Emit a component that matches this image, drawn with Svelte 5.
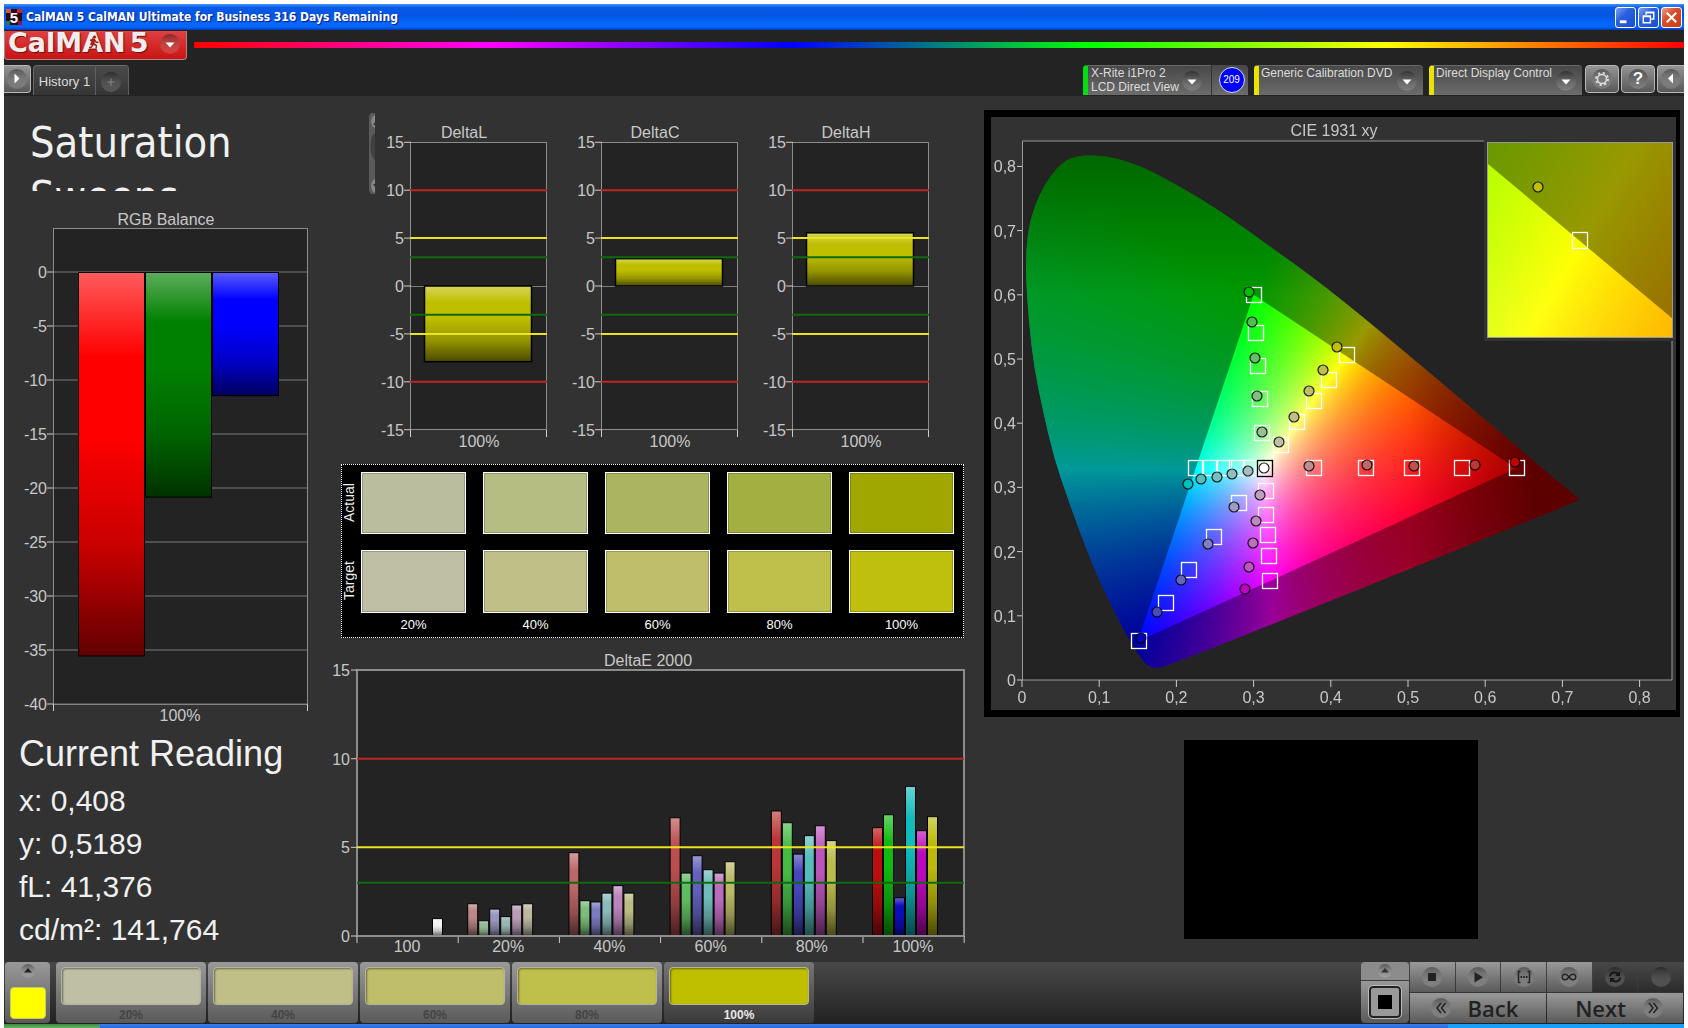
<script lang="ts">
  import { onMount } from "svelte";

  type Pt = [number, number];

  const LEVELS = ["20%", "40%", "60%", "80%", "100%"];
  const ACTUAL = ["#babd9e", "#b5bd82", "#abb560", "#a3af41", "#a0a800"];
  const TARGET = ["#bfbfa5", "#c0bf87", "#bfbe6b", "#bfbf4c", "#bfbf0e"];
  const STEPS = ["#bfbfa5", "#c0bf87", "#bfbe6b", "#bfbf4c", "#bfbf00"];

  const READINGS = ["x: 0,408", "y: 0,5189", "fL: 41,376", "cd/m²: 141,764"];

  const RGB_BARS = [
    { v: -35.5, color: "#ff0000" },
    { v: -20.8, color: "#008000" },
    { v: -11.4, color: "#0000ff" },
  ];
  const RGB_TICKS = [0, -5, -10, -15, -20, -25, -30, -35, -40];

  const DELTAS = [
    { name: "DeltaL", v: -7.9 },
    { name: "DeltaC", v: 2.85 },
    { name: "DeltaH", v: 5.55 },
  ];
  const DELTA_TICKS = [15, 10, 5, 0, -5, -10, -15];
  const LIMITS = [
    { v: 10, color: "#c02424" },
    { v: 5, color: "#ece420" },
    { v: 3, color: "#0f6a0f" },
  ];

  const DE_GROUPS = [
    { name: "100", first: 6, bars: [[0.98, "#f4f4f4"]] },
    { name: "20%", first: 0, bars: [[1.82, "#bb8787"], [0.86, "#94b994"], [1.52, "#9797be"], [1.09, "#9bb5b5"], [1.75, "#b89cb8"], [1.82, "#bab8a0"]] },
    { name: "40%", first: 0, bars: [[4.7, "#bb6767"], [1.99, "#7cbd7c"], [1.92, "#7a7abf"], [2.42, "#8ababa"], [2.84, "#bb84bb"], [2.42, "#babb84"]] },
    { name: "60%", first: 0, bars: [[6.67, "#bb4f50"], [3.55, "#5fbb5f"], [4.53, "#6161bb"], [3.74, "#70bbbb"], [3.55, "#bb6bbb"], [4.19, "#bbba68"]] },
    { name: "80%", first: 0, bars: [[7.05, "#bb3737"], [6.39, "#45bb45"], [4.62, "#4646bb"], [5.66, "#55bbbb"], [6.22, "#bb55bb"], [5.38, "#bbba4c"]] },
    { name: "100%", first: 0, bars: [[6.11, "#bb0e0e"], [6.84, "#10bb10"], [2.16, "#0d0dc0"], [8.44, "#10bbbb"], [5.94, "#bb08bb"], [6.73, "#bbba0c"]] },
  ] as { name: string; first: number; bars: [number, string][] }[];

  const yRgb = (v: number) => 81 - 10.8 * v;
  const yDelta = (v: number) => 173 - 9.58 * v;
  const yDe = (v: number) => 298 - 17.73 * v;
  const xDe = (group: number) => 20 + group * 101.2;

  // chromaticity plot
  const W = 685;
  const H = 593;
  const xCie = (v: number) => 31 + 772 * v;
  const yCie = (v: number) => 563 - 642 * v;
  const CIE_TICKS = [0, 0.1, 0.2, 0.3, 0.4, 0.5, 0.6, 0.7, 0.8];
  const comma = (v: number) => String(v).replace(".", ",");

  const GAMUT: Pt[] = [[0.64, 0.33], [0.3, 0.6], [0.15, 0.06]];
  const LOCUS: Pt[] = [
    [163, 551], [157, 549], [150, 541], [140, 526], [125, 498], [108, 463], [93, 426], [78, 385],
    [63, 341], [52, 294], [43, 250], [38, 206], [35, 162], [35, 132], [39, 103], [48, 78],
    [60, 58], [72, 45], [85, 39], [103, 38], [125, 41], [152, 50], [175, 62], [212, 83],
    [245, 105], [285, 134], [305, 148], [350, 182], [427, 246], [517, 322], [553, 353],
    [586, 380], [588, 383], [584, 385], [379, 468], [174, 550],
  ];

  const MEASURED: { color: string; at: Pt }[] = [
    { color: "#00c000", at: [258, 175] }, { color: "#4cbf4c", at: [261, 205] }, { color: "#66bf66", at: [264, 241] },
    { color: "#80bf80", at: [266, 279] }, { color: "#99bf99", at: [271, 315] },
    { color: "#c0c000", at: [346, 230] }, { color: "#bfbf4c", at: [332, 253] }, { color: "#bfbe6b", at: [318, 274] },
    { color: "#c0bf87", at: [303, 300] }, { color: "#bfbfa5", at: [288, 325] },
    { color: "#bf8f8f", at: [318, 349] }, { color: "#bf6a6a", at: [376, 348] }, { color: "#bf5050", at: [423, 349] },
    { color: "#bf3838", at: [484, 348] }, { color: "#c00000", at: [524, 345] },
    { color: "#00c0c0", at: [197, 367] }, { color: "#55bfbf", at: [210, 362] }, { color: "#77bfbf", at: [226, 360] },
    { color: "#8cbfbf", at: [241, 357] }, { color: "#a5bfbf", at: [257, 354] },
    { color: "#9c9cbf", at: [243, 390] }, { color: "#8080bf", at: [217, 427] }, { color: "#6464bf", at: [190, 463] },
    { color: "#4a4abf", at: [166, 495] }, { color: "#0000c0", at: [150, 521] },
    { color: "#bfa0bf", at: [269, 378] }, { color: "#bf88bf", at: [265, 404] }, { color: "#bf6ebf", at: [262, 426] },
    { color: "#bf55bf", at: [258, 450] }, { color: "#c000c0", at: [254, 472] },
  ];
  const GOALS: Pt[] = [
    [263, 178], [265, 216], [267, 249], [269, 282], [271, 316],
    [356, 238], [338, 263], [323, 284], [306, 305], [290, 328],
    [323, 351], [375, 351], [421, 351], [471, 351], [526, 351],
    [205, 351], [219, 351], [233, 351], [246, 351], [260, 351],
    [248, 386], [223, 420], [198, 453], [175, 486], [148, 524],
    [275, 374], [275, 398], [277, 418], [278, 439], [279, 464],
  ];

  let canvas: HTMLCanvasElement;

  function xyToRgb(x: number, y: number): number[] {
    const X = x / y;
    const Z = (1 - x - y) / y;
    const lin = [
      3.2406 * X - 1.5372 - 0.4986 * Z,
      -0.9689 * X + 1.8758 + 0.0415 * Z,
      0.0557 * X - 0.204 + 1.057 * Z,
    ].map((c) => Math.max(0, c));
    const top = Math.max(...lin);
    // fade towards the red and green ends of the locus
    const fade = 1 - Math.min(0.4, Math.max(0, (x - 0.5) * 2.4)) - Math.min(0.35, Math.max(0, (y - 0.6) * 1.5));
    return lin.map((c) => (255 * fade * c) / top);
  }

  function colorField(w: number, h: number, toXy: (px: number, py: number) => Pt): HTMLCanvasElement {
    const c = document.createElement("canvas");
    c.width = w;
    c.height = h;
    const ctx = c.getContext("2d")!;
    const img = ctx.createImageData(w, h);
    for (let j = 0; j < h; j++) {
      for (let i = 0; i < w; i++) {
        const [x, y] = toXy(i, j);
        const rgb = xyToRgb(x, Math.max(y, 0.005));
        const k = (j * w + i) * 4;
        img.data[k] = rgb[0];
        img.data[k + 1] = rgb[1];
        img.data[k + 2] = rgb[2];
        img.data[k + 3] = 255;
      }
    }
    ctx.putImageData(img, 0, 0);
    return c;
  }

  function smoothPath(pts: Pt[]): Path2D {
    const p = new Path2D();
    const n = pts.length;
    const mid = (a: Pt, b: Pt): Pt => [(a[0] + b[0]) / 2, (a[1] + b[1]) / 2];
    p.moveTo(...mid(pts[n - 1], pts[0]));
    for (let i = 0; i < n; i++) p.quadraticCurveTo(...pts[i], ...mid(pts[i], pts[(i + 1) % n]));
    p.closePath();
    return p;
  }

  function polygon(pts: Pt[]): Path2D {
    const p = new Path2D();
    pts.forEach(([x, y], i) => (i ? p.lineTo(x, y) : p.moveTo(x, y)));
    p.closePath();
    return p;
  }

  function paint(ctx: CanvasRenderingContext2D, field: HTMLCanvasElement, x: number, y: number, outer: Path2D, gamut: Path2D) {
    ctx.save();
    ctx.clip(outer);
    ctx.drawImage(field, x, y);
    ctx.fillStyle = "rgba(0, 0, 0, 0.4)";
    ctx.fillRect(x, y, field.width, field.height);
    ctx.clip(gamut);
    ctx.drawImage(field, x, y);
    ctx.restore();
  }

  onMount(() => {
    const ctx = canvas.getContext("2d")!;
    ctx.fillStyle = "#232323";
    ctx.fillRect(31, 24, 650, 539);
    const field = colorField(W, H, (px, py) => [(px - 31) / 772, (563 - py) / 642]);
    paint(ctx, field, 0, 0, smoothPath(LOCUS), polygon(GAMUT.map(([x, y]): Pt => [xCie(x), yCie(y)])));

    // magnified corner around the 100% yellow target
    ctx.fillStyle = "#323232";
    ctx.fillRect(493, 22, 192, 202);
    const zoomField = colorField(185, 195, (px, py) => [0.4193 + (px - 93) / 3752, 0.5053 - (py - 98) / 3956]);
    const box = new Path2D();
    box.rect(497, 26, 185, 195);
    paint(ctx, zoomField, 497, 26, box, polygon(GAMUT.map(([x, y]): Pt => [589 + (x - 0.4193) * 3752, 124 - (y - 0.5053) * 3956])));
  });
</script>

{#snippet knob(kind: string)}
  <svg class="knob" viewBox="0 0 20 20" width="20" height="20" aria-hidden="true">
    <circle cx="10" cy="10" r="10" fill="url(#knob)" />
    {#if kind === "down"}
      <path d="M5.500 8.500h9l-4.500 5z" fill="#fff" />
    {:else if kind === "right"}
      <path d="M7.500 4.500v10l5-5z" fill="#fff" />
    {:else if kind === "left"}
      <path d="M12 4.500v10l-5-5z" fill="#fff" />
    {:else if kind === "plus"}
      <path d="M10 6.500v7M6.500 10h7" stroke="#888" fill="none" />
    {:else if kind === "gear"}
      <circle cx="10" cy="10" r="4.500" fill="none" stroke="#ddd" stroke-width="1.500" />
      <circle cx="10" cy="10" r="6" fill="none" stroke="#ddd" stroke-width="2" stroke-dasharray="2.200 2.512" />
    {:else if kind === "stop"}
      <path d="M6 6h8v8H6z" fill="#222" />
    {:else if kind === "play"}
      <path d="M6.500 5v10.500l8.500-5.200z" fill="#222" />
    {:else if kind === "bracket"}
      <path d="M6.500 4.500H4.500v11h2M13.500 4.500h2v11h-2" fill="none" stroke="#222" stroke-width="1.500" />
      <path d="M6.500 9h1.600v2H6.500zM9.200 9h1.600v2H9.200zM11.900 9h1.600v2h-1.600z" fill="#222" />
    {:else if kind === "loop"}
      <path d="M10 10C8.500 7.800 7.300 7.200 6 7.200a2.800 2.800 0 0 0 0 5.600c1.300 0 2.500-.6 4-2.800s2.700-2.800 4-2.800a2.800 2.800 0 0 1 0 5.600c-1.300 0-2.500-.6-4-2.800z" fill="none" stroke="#222" stroke-width="1.400" />
    {:else if kind === "back"}
      <path d="M10 5l-4 5 4 5M14.500 5l-4 5 4 5" fill="none" stroke="#222" stroke-width="1.500" />
    {:else if kind === "next"}
      <path d="M6 5l4 5-4 5M10.500 5l4 5-4 5" fill="none" stroke="#222" stroke-width="1.500" />
    {:else if kind === "refresh"}
      <path d="M5 9.500C5 7 7.200 5.500 9.500 5.500c1.500 0 2.700.5 3.500 1.400M15 10.500c0 2.500-2.200 4-4.500 4-1.500 0-2.700-.5-3.500-1.400" fill="none" stroke="#151515" stroke-width="2" />
      <path d="M15 4v5h-5zM5 16v-5h5z" fill="#151515" />
    {/if}
  </svg>
{/snippet}

<svg class="defs" width="0" height="0" aria-hidden="true">
  <defs>
    <linearGradient id="knob" x1="0" y1="0" x2="0" y2="1">
      <stop offset="0" stop-color="#000" stop-opacity=".38" />
      <stop offset="1" stop-color="#fff" stop-opacity=".14" />
    </linearGradient>
    <linearGradient id="shade" x1="0" y1="0" x2="0" y2="1">
      <stop offset="0" stop-color="#fff" stop-opacity=".36" />
      <stop offset=".22" stop-color="#fff" stop-opacity="0" />
      <stop offset=".42" stop-color="#000" stop-opacity="0" />
      <stop offset=".72" stop-color="#000" stop-opacity=".22" />
      <stop offset="1" stop-color="#000" stop-opacity=".62" />
    </linearGradient>
  </defs>
</svg>

<div class="window">
  <div class="titlebar">
    <svg width="16" height="16" viewBox="0 0 16 16" aria-hidden="true">
      <rect width="16" height="16" fill="#2a0a14" />
      <path d="M0 0h5v4H0z" fill="#d85a30" /><path d="M11 0h5v4h-5z" fill="#c02828" /><path d="M0 12h4v4H0z" fill="#28803c" /><path d="M12 12h4v4h-4z" fill="#8a1450" />
      <text x="8" y="14" text-anchor="middle" class="appicon">5</text>
    </svg>
    <span class="caption">CalMAN 5 CalMAN Ultimate for Business 316 Days Remaining</span>
    <button class="win" aria-label="Minimize"><svg viewBox="0 0 20 20"><path d="M4 13h7v3H4z" fill="#fff" /></svg></button>
    <button class="win" aria-label="Restore"><svg viewBox="0 0 20 20"><path d="M7.500 7V4.500h8v7H13M7 5h9" fill="none" stroke="#fff" stroke-width="1.500" /><path d="M4.500 8.500h7.500v7H4.500zM4 9h8" fill="none" stroke="#fff" stroke-width="1.500" /></svg></button>
    <button class="win close" aria-label="Close"><svg viewBox="0 0 20 20"><path d="M5 5l10 10M15 5L5 15" stroke="#fff" stroke-width="2.200" /></svg></button>
  </div>

  <header>
    <div class="brandrow">
      <button class="brand">
        <span>CalMAN</span><span>5</span>
        <svg class="runner" viewBox="0 0 12 14" width="12" height="14" aria-hidden="true">
          <circle cx="6.500" cy="2" r="1.600" fill="#a81818" />
          <path d="M2 5.500l4-1.500 2 3 2.500.5M6 4.500L5.500 9l3 1.500-.5 3M5.500 9L3 12.500H1" fill="none" stroke="#a81818" stroke-width="1.400" />
        </svg>
        {@render knob("down")}
      </button>
      <div class="rainbow"></div>
    </div>
    <div class="tabs">
      <button class="square first" aria-label="Expand">{@render knob("right")}</button>
      <button class="tab history">History 1</button>
      <button class="tab add" aria-label="Add history">{@render knob("plus")}</button>
      <span class="grow"></span>
      <button class="tab device meter"><span>X-Rite i1Pro 2<br />LCD Direct View</span>{@render knob("down")}</button>
      <div class="count"><b>209</b></div>
      <button class="tab device source"><span>Generic Calibration DVD</span>{@render knob("down")}</button>
      <button class="tab device display"><span>Direct Display Control</span>{@render knob("down")}</button>
      <button class="square" aria-label="Settings">{@render knob("gear")}</button>
      <button class="square help"><span>?</span></button>
      <button class="square last" aria-label="Collapse">{@render knob("left")}</button>
    </div>
  </header>

  <main>
    <section class="left">
      <h1>Saturation Sweeps</h1>
      <svg class="chart" viewBox="0 0 333 541">
        <text x="162" y="34" class="mid">RGB Balance</text>
        <rect x="49.500" y="37.500" width="254" height="476" class="plot" />
        {#each RGB_TICKS as v}
          <line x1="50" x2="303" y1={yRgb(v)} y2={yRgb(v)} class="grid" />
          <line x1="43" x2="49" y1={yRgb(v)} y2={yRgb(v)} class="tick" />
          <text x="43" y={yRgb(v) + 6} class="end">{v}</text>
        {/each}
        <path d="M49.500 513v7M303.500 513v7" class="tick" />
        {#each RGB_BARS as bar, i}
          <rect x={74.5 + i * 67} y="81.500" width="66" height={-bar.v * 10.8} fill={bar.color} />
          <rect x={74.5 + i * 67} y="81.500" width="66" height={-bar.v * 10.8} fill="url(#shade)" stroke="#000" />
        {/each}
        <text x="176" y="530" class="mid">100%</text>
      </svg>
      <div class="reading">
        <h2>Current Reading</h2>
        {#each READINGS as line}
          <p>{line}</p>
        {/each}
      </div>
    </section>

    <section class="middle">
      <div class="deltas">
        <svg class="sliver" viewBox="0 0 6 81" width="6" height="81" aria-hidden="true">
          <path d="M2 0h4v81H2l-2-3V3z" fill="#5a5a5a" />
          <path d="M6 2C1 4 1 13 6 15zM6 66C1 68 1 78 6 80z" fill="#888" />
          <path d="M6 20C0 23 0 43 6 47z" fill="#404040" />
          <path d="M6 9l-2 3h2zM4 71h2v3z" fill="#333" />
        </svg>
        {#each DELTAS as d}
          <svg class="delta" viewBox="0 0 191 342">
            <text x="89" y="25" class="mid">{d.name}</text>
            <rect x="35.500" y="29.500" width="136" height="287" class="plot" />
            <line x1="36" x2="171" y1="173.500" y2="173.500" class="grid" />
            {#each DELTA_TICKS as v}
              <line x1="29" x2="36" y1={yDelta(v)} y2={yDelta(v)} class="tick" />
              <text x="29" y={yDelta(v) + 6} class="end">{v}</text>
            {/each}
            <path d="M35.500 317v7M171.500 317v7" class="tick" />
            <rect x="49.500" y={yDelta(Math.max(0, d.v))} width="107" height={Math.abs(d.v) * 9.58} fill="#bfbf00" />
            <rect x="49.500" y={yDelta(Math.max(0, d.v))} width="107" height={Math.abs(d.v) * 9.58} fill="url(#shade)" stroke="#000" stroke-width="1.500" />
            {#each LIMITS as l}
              <path d="M35 {yDelta(l.v)}h137M35 {yDelta(-l.v)}h137" stroke={l.color} stroke-width="2" />
            {/each}
            <text x="104" y="334" class="mid">100%</text>
          </svg>
        {/each}
      </div>

      <div class="swatches">
        <div class="line">
          <span class="side">Actual</span>
          {#each ACTUAL as color}
            <i style:background={color}></i>
          {/each}
        </div>
        <div class="line target">
          <span class="side">Target</span>
          {#each TARGET as color}
            <i style:background={color}></i>
          {/each}
        </div>
        <div class="line names">
          <span class="side"></span>
          {#each LEVELS as name}
            <b>{name}</b>
          {/each}
        </div>
      </div>

      <svg class="chart" viewBox="0 0 643 324">
        <text x="311" y="28" class="mid">DeltaE 2000</text>
        <rect x="20" y="32" width="607" height="266" class="plot thick" />
        {#each DE_GROUPS as g, i}
          {#each g.bars as [v, color], j}
            <rect x={xDe(i) + 9.5 + (g.first + j) * 11} y={yDe(v)} width="10" height={v * 17.73} fill={color} />
            <rect x={xDe(i) + 9.5 + (g.first + j) * 11} y={yDe(v)} width="10" height={v * 17.73} fill="url(#shade)" stroke="#000" />
          {/each}
          <text x={xDe(i) + 50} y="314" class="mid">{g.name}</text>
        {/each}
        {#each [0, 1, 2, 3, 4, 5, 6] as i}
          <line x1={xDe(i)} x2={xDe(i)} y1="298" y2="305" class="tick" />
        {/each}
        {#each [15, 10, 5, 0] as v}
          <line x1="14" x2="20" y1={yDe(v)} y2={yDe(v)} class="tick" />
          <text x="13" y={yDe(v) + 6} class="end">{v}</text>
        {/each}
        <line x1="20" x2="627" y1="298" y2="298" class="axis" />
        {#each LIMITS as l}
          <line x1="20" x2="627" y1={yDe(l.v)} y2={yDe(l.v)} stroke={l.color} stroke-width="2" />
        {/each}
      </svg>
    </section>

    <section class="right">
      <div class="cie">
        <canvas bind:this={canvas} width={W} height={H}></canvas>
        <svg viewBox="0 0 685 593">
          <text x="343" y="19" class="mid">CIE 1931 xy</text>
          <path d="M493 24H31.500V563H681V224" class="outline" />
          <rect x="496.500" y="25.500" width="185" height="195" class="outline" />
          {#each CIE_TICKS as v}
            <line x1="26" x2="31" y1={yCie(v)} y2={yCie(v)} class="tick" />
            <text x="25" y={yCie(v) + 6} class="end">{comma(v)}</text>
            <line x1={xCie(v)} x2={xCie(v)} y1="563" y2="570" class="tick" />
            <text x={xCie(v)} y="586" class="mid">{comma(v)}</text>
          {/each}
          {#each GOALS as [x, y]}
            <rect x={x - 7.5} y={y - 7.5} width="15" height="15" class="goal" />
          {/each}
          <rect x="266.500" y="343.500" width="15" height="16" fill="none" stroke="#000" stroke-width="1.300" />
          {#each MEASURED as m}
            <circle cx={m.at[0]} cy={m.at[1]} r="5" fill={m.color} class="dot" />
          {/each}
          <circle cx="273" cy="351" r="5" fill="#fff" class="dot" />
          <rect x="581.500" y="115.500" width="15" height="16" class="goal" />
          <circle cx="547" cy="70" r="5" fill="#c0c000" class="dot" />
        </svg>
      </div>
      <div class="pattern"></div>
    </section>
  </main>

  <footer>
    <button class="current" aria-label="Current color">
      <svg viewBox="0 0 14 14" width="14" height="14"><circle cx="7" cy="7" r="7" fill="url(#knob)" /><path d="M3 8.500h8L7 4z" fill="#222" /></svg>
      <i></i>
    </button>
    {#each STEPS as color, i}
      <button class="step" class:on={i === 4}>
        <i style:background={color}></i>
        <span>{LEVELS[i]}</span>
      </button>
    {/each}
    <span class="grow"></span>
    <div class="record">
      <button class="up" aria-label="More"><svg viewBox="0 0 14 14" width="14" height="14"><circle cx="7" cy="7" r="7" fill="url(#knob)" /><path d="M3 8.500h8L7 4z" fill="#333" /></svg></button>
      <button class="patch" aria-label="Pattern window"><i></i></button>
    </div>
    <div class="transport">
      <button aria-label="Stop">{@render knob("stop")}</button>
      <button aria-label="Play">{@render knob("play")}</button>
      <button aria-label="Read series">{@render knob("bracket")}</button>
      <button aria-label="Continuous">{@render knob("loop")}</button>
      <button class="off" aria-label="Refresh" disabled>{@render knob("refresh")}</button>
      <button class="off" aria-label="Record" disabled>{@render knob("none")}</button>
      <button class="nav back">{@render knob("back")}<span>Back</span></button>
      <button class="nav next"><span>Next</span>{@render knob("next")}</button>
    </div>
  </footer>
</div>
<div class="taskbar"><span></span><em></em></div>

<style>
  :global(body) { margin: 0; background: #fff; font-family: "Liberation Sans", Arial, sans-serif; }
  button { margin: 0; padding: 0; border: 0; font: inherit; color: inherit; cursor: pointer; box-sizing: border-box; }
  svg { display: block; }
  .defs { position: absolute; }
  .window { margin: 4px 4px 0; background: #232323; }
  .grow { flex: 1; }

  .titlebar { display: flex; align-items: center; gap: 2px; height: 26px; padding: 0 2px; background: linear-gradient(#3a93ff, #0a5ce8 14%, #0454e0 40%, #0468fc 75%, #0463f4 90%, #0438b0); }
  .caption { flex: 1; padding-left: 2px; color: #fff; font: bold 12px/26px "DejaVu Sans Condensed", "DejaVu Sans", sans-serif; text-shadow: 1px 1px 1px #0a1883; }
  .appicon { font: bold 15px "Liberation Sans", sans-serif; fill: #fff; }
  .win { width: 21px; height: 21px; border: 1px solid #fff; border-radius: 3px; background: linear-gradient(135deg, #7fa4f0, #2a5fdc 40%, #1c4fd0); }
  .win.close { background: linear-gradient(135deg, #f0a088, #dc4c28 40%, #c83c18); }

  header { height: 66px; }
  .brandrow { display: flex; align-items: center; height: 30px; gap: 7px; }
  .brand { display: flex; align-items: center; position: relative; width: 183px; height: 29px; padding: 0 6px 4px 3px; gap: 4px; border: solid #a88; border-width: 0 1px 1px; border-radius: 0 0 4px 4px; background: linear-gradient(#e04040, #c81414); color: #eee; font: bold 27px/24px "DejaVu Sans", sans-serif; text-shadow: 1px 1px 1px #701010; overflow: hidden; }
  .brand .knob { margin: 2px 0 0 auto; }
  .runner { position: absolute; left: 83px; top: 4px; }
  .rainbow { flex: 1; height: 6px; background: linear-gradient(90deg, #f00, #f0f, #00f, #0f0, #ff0, #f00); }

  .tabs { display: flex; align-items: flex-start; height: 31px; padding-top: 5px; overflow: hidden; }
  .square { display: flex; align-items: center; justify-content: center; width: 34px; height: 28px; margin-left: 2px; border: 1px solid #b8b8b8; border-radius: 4px; background: linear-gradient(#949494, #585858); color: #fff; }
  .square.first { width: 27px; margin: 0 2px 0 0; border-left: 0; border-radius: 0 4px 4px 0; }
  .square.last { width: 27px; border-right: 0; border-radius: 4px 0 0 4px; }
  .help span { width: 20px; height: 20px; border-radius: 50%; background: linear-gradient(#555, #808080); font: bold 17px/20px "Liberation Sans", sans-serif; }
  .tab { height: 30px; color: #ddd; background: linear-gradient(#4a4a4a, #353535); border-top: 1px solid #6a6a6a; }
  .history { width: 63px; padding-top: 2px; border-left: 1px solid #6a6a6a; border-right: 1px solid #606060; border-radius: 4px 0 0 0; font-size: 13px; }
  .add { width: 33px; padding: 2px 0 0 5px; border-right: 1px solid #606060; border-radius: 0 4px 0 0; }
  .device { display: flex; align-items: flex-start; justify-content: space-between; padding: 0 6px 0 2px; border-left: 5px solid #e8e400; border-radius: 4px 4px 0 0; background: linear-gradient(#484848, #6c6c6c); font-size: 12px; line-height: 14px; text-align: left; white-space: nowrap; }
  .device .knob { margin-top: 5px; }
  .meter { width: 128px; padding: 0 9px 0 3px; border-left-color: #00e010; border-radius: 4px 0 0 0; }
  .count { display: flex; align-items: center; justify-content: center; box-sizing: border-box; width: 37px; height: 30px; margin-right: 6px; padding-left: 3px; border-left: 1px solid #333; border-radius: 0 4px 0 0; background: linear-gradient(#484848, #6c6c6c); }
  .count b { width: 24px; height: 24px; border: 1px solid #ddd; border-radius: 50%; background: #00f; color: #fff; font: 10px/24px "Liberation Sans", sans-serif; text-align: center; }
  .source { width: 169px; margin-right: 6px; }
  .display { width: 153px; margin-right: 1px; }

  main { display: grid; grid-template-columns: 333fr 643fr 704fr; align-items: start; background: #323232; }
  text { font-size: 16px; fill: #c8c8c8; }
  .mid { text-anchor: middle; }
  .end { text-anchor: end; }
  .chart { width: 100%; overflow: visible; }
  .plot { fill: #232323; stroke: #8c8c8c; }
  .thick { stroke-width: 2; }
  .grid { stroke: #7c7c7c; }
  .tick { stroke: #ccc; fill: none; }
  .axis { stroke: #8c8c8c; stroke-width: 2; }
  .outline { fill: none; stroke: #999; }

  h1 { width: 250px; height: 76px; margin: 0; padding: 19px 0 0 26px; overflow: hidden; color: #f0f0f0; font: 43px/54px "DejaVu Sans Condensed", "DejaVu Sans", sans-serif; }
  .reading { padding: 0 0 11px 15px; color: #f0f0f0; white-space: nowrap; }
  h2 { margin: 0 0 4px; font-size: 36px; font-weight: normal; line-height: 43px; }
  p { margin: 0; font-size: 30px; line-height: 43px; }

  .deltas { display: flex; align-items: flex-start; padding: 17px 32px 0; }
  .sliver { flex: none; }
  .delta { flex: 1; min-width: 0; }
  .swatches { margin: 9px 16px 0 4px; padding: 7px 9px 0 0; border: 1px dotted #fff; background: #000; }
  .line { display: flex; gap: 17px; margin-bottom: 16px; }
  .line.target, .names { margin-bottom: 0; }
  .side { display: flex; justify-content: center; width: 14px; height: 62px; margin-right: -12px; color: #eee; font-size: 14px; line-height: 14px; writing-mode: vertical-rl; transform: rotate(180deg); }
  .names .side { height: 24px; }
  .line i { flex: 1; height: 60px; border: 1px solid #fff; box-shadow: inset 0 0 0 1px rgba(0, 0, 0, 0.2); }
  .target i { height: 61px; }
  .names b { flex: 1; height: 24px; color: #fff; font-size: 13px; font-weight: normal; line-height: 24px; text-align: center; }

  .cie { display: grid; margin: 14px 4px 0; border: solid #000; border-width: 7px 4px 7px 7px; }
  .cie canvas, .cie svg { grid-area: 1 / 1; width: 100%; }
  .goal { fill: none; stroke: #fff; stroke-width: 1.3px; }
  .dot { stroke: #000; stroke-width: 1.2px; stroke-opacity: 0.85; }
  .pattern { width: 294px; height: 199px; margin: 23px 0 0 29%; background: #000; }

  footer { display: flex; height: 62px; background: linear-gradient(#484848, #222); }
  footer button { background: linear-gradient(#999, #5a5a5a); }
  .current { display: flex; flex-direction: column; align-items: center; justify-content: space-between; width: 45px; height: 61px; margin: 0 6px 0 1px; padding: 2px 0 4px; border-radius: 4px; }
  .current i { width: 34px; height: 30px; border: 1px solid #c8c860; border-radius: 4px; background: #ff0; }
  .step { width: 150px; height: 61px; margin-right: 2px; padding: 5px 5px 0; border-radius: 4px; color: #444; font-size: 12px; font-weight: bold; line-height: 20px; }
  .step i { display: block; height: 36px; border: 1px solid #b4b4a0; border-radius: 4px; box-shadow: inset 1px 1px 2px rgba(0, 0, 0, 0.45); }
  .step.on { background: linear-gradient(#777, #3a3a3a); color: #e8e8e8; }
  .record { width: 48px; margin-right: 1px; }
  .record .up { display: flex; align-items: center; justify-content: center; width: 100%; height: 18px; border-radius: 4px 4px 0 0; background: #8c8c8c; }
  .record .patch { display: flex; align-items: center; justify-content: center; width: 100%; height: 42px; margin-top: 1px; border-radius: 0 0 4px 4px; }
  .patch i { width: 14px; height: 14px; padding: 7px; border: 2px solid #222; border-radius: 4px; outline: 1px solid #bbb; background: linear-gradient(#000, #000) content-box, #999; }
  .transport { display: grid; grid-template-columns: repeat(6, 1fr); grid-template-rows: 30px 30px; gap: 1px; width: 273px; margin-right: 1px; }
  .transport button { display: flex; align-items: center; justify-content: center; }
  .transport button.off { background: linear-gradient(#484848, #2c2c2c); }
  .transport .nav { grid-column: span 3; gap: 17px; color: #222; font: 600 22px/30px "Open Sans", "Noto Sans", sans-serif; }
  .transport .back { padding-right: 7px; }
  .transport .next { padding-left: 8px; }

  .taskbar { display: flex; height: 4px; margin: 0 4px; background: linear-gradient(#3a80ec, #2868dc); }
  .taskbar span { width: 96px; border-radius: 0 4px 0 0; background: linear-gradient(#3c8a3c, #66b466); }
  .taskbar em { width: 236px; margin-left: auto; background: #18a0f8; }
</style>
